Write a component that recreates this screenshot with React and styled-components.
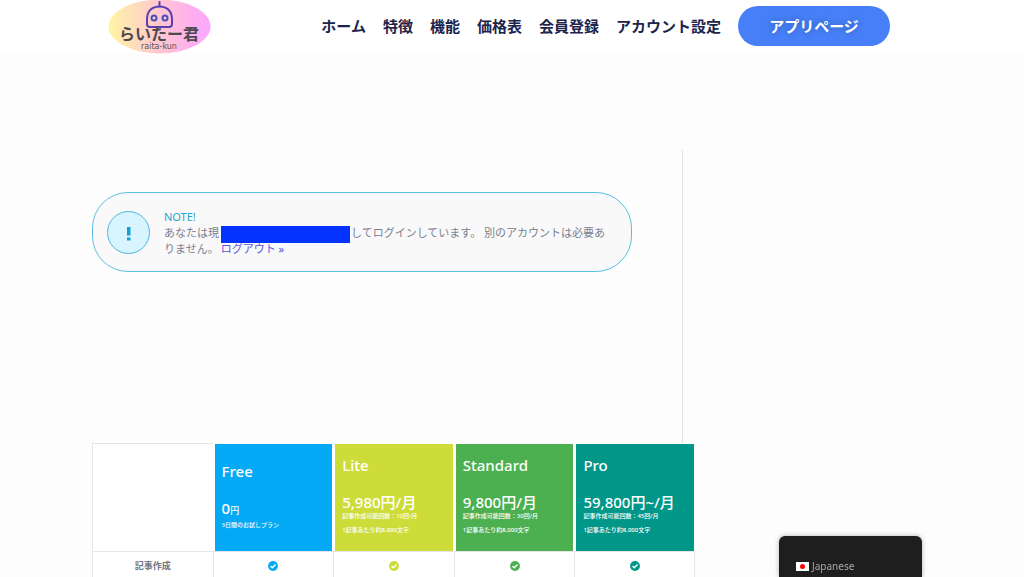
import React from "react";
import styled, { createGlobalStyle } from "styled-components";

const GlobalStyle = createGlobalStyle`
  *, *::before, *::after { box-sizing: border-box; }
  body {
    margin: 0;
    background: #fdfdfd;
    color: #7a8090;
    font-family: "Noto Sans", "Noto Sans CJK JP", sans-serif;
    font-size: 11px;
    line-height: 16px;
    overflow-x: hidden;
  }
`;

const Header = styled.header`
  background: #fff;
`;

const HeaderInner = styled.div`
  display: flex;
  align-items: flex-start;
  justify-content: space-between;
  max-width: 840px;
  height: 53px;
  margin: 0 auto;
  padding: 0 42px 0 16px;
`;

const LogoLink = styled.a`
  display: block;
  height: 54px;
  svg { display: block; }
`;

const Nav = styled.nav`
  display: flex;
  align-items: center;
  gap: 17px;
  padding-top: 6px;
`;

const NavLink = styled.a`
  color: #1c244b;
  font-family: "Noto Sans CJK JP", sans-serif;
  font-size: 15px;
  line-height: 22px;
  font-weight: 700;
  text-decoration: none;
  white-space: nowrap;
`;

const AppButton = styled.button`
  width: 152px;
  height: 40px;
  padding: 0;
  border: 0;
  border-radius: 20px;
  background: #467ff7;
  color: #fff;
  font-family: "Noto Sans CJK JP", sans-serif;
  font-size: 15px;
  line-height: 22px;
  font-weight: 700;
  text-shadow: 0 0 6px rgba(0, 0, 0, 0.3);
  white-space: nowrap;
`;

const Main = styled.main`
  max-width: 840px;
  margin: 0 auto;
  padding-top: 97px;
`;

const Account = styled.section`
  width: 591px;
  max-width: 100%;
  min-height: 293px;
  padding: 42px 50px 0 0;
  border-right: 1px solid #e2e2e4;
`;

const Notice = styled.div`
  display: flex;
  align-items: center;
  gap: 14px;
  min-height: 80px;
  padding: 0 14px;
  border: 1px solid #5bbfe4;
  border-radius: 36px;
  background: #f9f9f9;
`;

const NoticeIcon = styled.span`
  display: flex;
  align-items: center;
  justify-content: center;
  flex: none;
  width: 43px;
  height: 43px;
  padding-top: 4px;
  border: 1px solid #4db8de;
  border-radius: 50%;
  background: #d8f4ff;
`;

const NoticeBody = styled.div`
  padding-top: 2px;
`;

const NoticeTitle = styled.div`
  color: #1fa5d4;
`;

const NoticeText = styled.p`
  margin: 0;
  white-space: nowrap;
`;

const Redacted = styled.span`
  display: inline-block;
  width: 129px;
  height: 17px;
  margin: -2px 1px -2px 2px;
  background: #0433ff;
  vertical-align: middle;
`;

const LogoutLink = styled.a`
  margin-left: 2px;
  color: #6050dc;
  text-decoration: none;
`;

const PlanTable = styled.table`
  width: 603px;
  max-width: 100%;
  table-layout: fixed;
  border-collapse: separate;
  border-spacing: 0;
  background: #fff;
`;

const EmptyHead = styled.td`
  padding: 0;
  border: 1px solid #e6e6e9;
  border-width: 1px 0 0 1px;
`;

const PlanHead = styled.th`
  height: 108px;
  padding: 1px 1px 0 2px;
  text-align: left;
  vertical-align: top;
  font-weight: 500;
`;

const PlanCard = styled.div`
  display: flex;
  flex-direction: column;
  justify-content: center;
  height: 107px;
  padding: 0 7px 6px;
  background: ${(p) => p.$color};
  color: #fff;
  white-space: nowrap;
`;

const PlanName = styled.div`
  margin-bottom: 17px;
  font-size: 15px;
  line-height: 20px;
  font-weight: 500;
`;

const Price = styled.div`
  font-size: 15px;
  line-height: 20px;
  font-weight: 500;
`;

const Unit = styled.span`
  font-size: ${(p) => (p.$small ? 9 : 15)}px;
`;

const PlanNote = styled.div`
  margin-bottom: ${(p) => (p.$spaced ? 6 : 0)}px;
  font-size: 6px;
  line-height: 8px;
  font-weight: 500;
`;

const FeatureName = styled.th`
  height: 30px;
  padding: 0;
  border: 1px solid #e6e6e9;
  border-width: 1px 0 1px 1px;
  color: #6f7582;
  font-size: 9px;
  line-height: 14px;
  font-weight: 600;
`;

const FeatureCell = styled.td`
  padding: 0;
  border: 1px solid #e6e6e9;
  border-width: 1px 0 1px 1px;
  text-align: center;
  color: ${(p) => p.$color};
  &:last-child { border-right-width: 1px; }
  svg { display: block; margin: 0 auto; }
`;

const LanguageSwitcher = styled.div`
  position: fixed;
  right: 102px;
  bottom: 0;
  width: 143px;
  height: 41px;
  padding: 22px 17px 0;
  border-radius: 6px 6px 0 0;
  background: #1e1e1e;
  box-shadow: 0 0 5px rgba(0, 0, 0, 0.3);
`;

const LanguageLink = styled.a`
  display: flex;
  align-items: center;
  gap: 3px;
  color: #a9a9a9;
  font-size: 10px;
  text-decoration: none;
`;

const navItems = ["ホーム", "特徴", "機能", "価格表", "会員登録", "アカウント設定"];

const plans = [
  { name: "Free", color: "#03a9f4", price: "0", unit: "円", small: true, notes: ["3日間のお試しプラン"] },
  { name: "Lite", color: "#cddc39", price: "5,980", unit: "円/月", notes: ["記事作成可能回数：10回/月", "1記事あたり約8,000文字"] },
  { name: "Standard", color: "#4caf50", price: "9,800", unit: "円/月", notes: ["記事作成可能回数：30回/月", "1記事あたり約8,000文字"] },
  { name: "Pro", color: "#009688", price: "59,800", unit: "円~/月", notes: ["記事作成可能回数：45回/月", "1記事あたり約8,000文字"] },
];

function Logo() {
  return (
    <svg width="103" height="54" viewBox="0 0 103 54" role="img" aria-label="らいたー君">
      <defs>
        <linearGradient id="logoFill" x1="0" x2="1" y1="0" y2="0">
          <stop offset="0" stopColor="#fff5a5" />
          <stop offset="0.45" stopColor="#ffcbcb" />
          <stop offset="0.8" stopColor="#ffb0ee" />
          <stop offset="1" stopColor="#fba6ff" />
        </linearGradient>
      </defs>
      <ellipse cx="51.5" cy="26.5" rx="51" ry="27" fill="url(#logoFill)" />
      <g fill="none" stroke="#5b3fae" strokeWidth="2" strokeLinecap="round" strokeLinejoin="round">
        <path d="M51.5 2v4.500" />
        <path d="M39 19C39 11 44 6.500 51.500 6.500S64 11 64 19v5q0 3-3 3H42q-3 0-3-3z" />
        <circle cx="46" cy="18" r="2.500" stroke="#4a4fc0" />
        <circle cx="57" cy="18" r="2.500" stroke="#4a4fc0" />
      </g>
      <text x="51" y="40" textAnchor="middle" fontFamily="'Noto Sans CJK JP', sans-serif" fontSize="16" fontWeight="700" fill="#4d4a4d">らいたー君</text>
      <text x="51" y="49" textAnchor="middle" fontFamily="'DejaVu Sans', sans-serif" fontSize="8" fill="#5a5054">raita-kun</text>
    </svg>
  );
}

function CheckIcon() {
  return (
    <svg width="10" height="10" viewBox="0 0 512 512" role="img" aria-label="対応">
      <circle cx="256" cy="256" r="252" fill="currentColor" />
      <path d="M134 262l86 86 166-166" fill="none" stroke="#fff" strokeWidth="74" />
    </svg>
  );
}

export default function App() {
  return (
    <>
      <GlobalStyle />
      <Header>
        <HeaderInner>
          <LogoLink href="#"><Logo /></LogoLink>
          <Nav>
            {navItems.map((item) => (
              <NavLink key={item} href="#">{item}</NavLink>
            ))}
            <AppButton type="button">アプリページ</AppButton>
          </Nav>
        </HeaderInner>
      </Header>
      <Main>
        <Account>
          <Notice role="status">
            <NoticeIcon>
              <svg width="5" height="14" viewBox="0 0 5 14" aria-hidden="true">
                <path d="M1 0h3.500v8.500H1zM1 10.500h3.500v3H1z" fill="#159fd0" />
              </svg>
            </NoticeIcon>
            <NoticeBody>
              <NoticeTitle>NOTE!</NoticeTitle>
              <NoticeText>
                あなたは現<Redacted />してログインしています。 別のアカウントは必要あ<br />
                りません。<LogoutLink href="#">ログアウト »</LogoutLink>
              </NoticeText>
            </NoticeBody>
          </Notice>
        </Account>
        <PlanTable>
          <thead>
            <tr>
              <EmptyHead />
              {plans.map((plan) => (
                <PlanHead key={plan.name} scope="col">
                  <PlanCard $color={plan.color}>
                    <PlanName>{plan.name}</PlanName>
                    <Price>{plan.price}<Unit $small={plan.small}>{plan.unit}</Unit></Price>
                    {plan.notes.map((note, i) => (
                      <PlanNote key={note} $spaced={i < plan.notes.length - 1}>{note}</PlanNote>
                    ))}
                  </PlanCard>
                </PlanHead>
              ))}
            </tr>
          </thead>
          <tbody>
            <tr>
              <FeatureName scope="row">記事作成</FeatureName>
              {plans.map((plan) => (
                <FeatureCell key={plan.name} $color={plan.color}><CheckIcon /></FeatureCell>
              ))}
            </tr>
          </tbody>
        </PlanTable>
      </Main>
      <LanguageSwitcher>
        <LanguageLink href="#">
          <svg width="13" height="9" viewBox="0 0 13 9" aria-hidden="true">
            <rect width="13" height="9" fill="#fff" />
            <circle cx="6.500" cy="4.500" r="2.500" fill="#f00" />
          </svg>
          Japanese
        </LanguageLink>
      </LanguageSwitcher>
    </>
  );
}
